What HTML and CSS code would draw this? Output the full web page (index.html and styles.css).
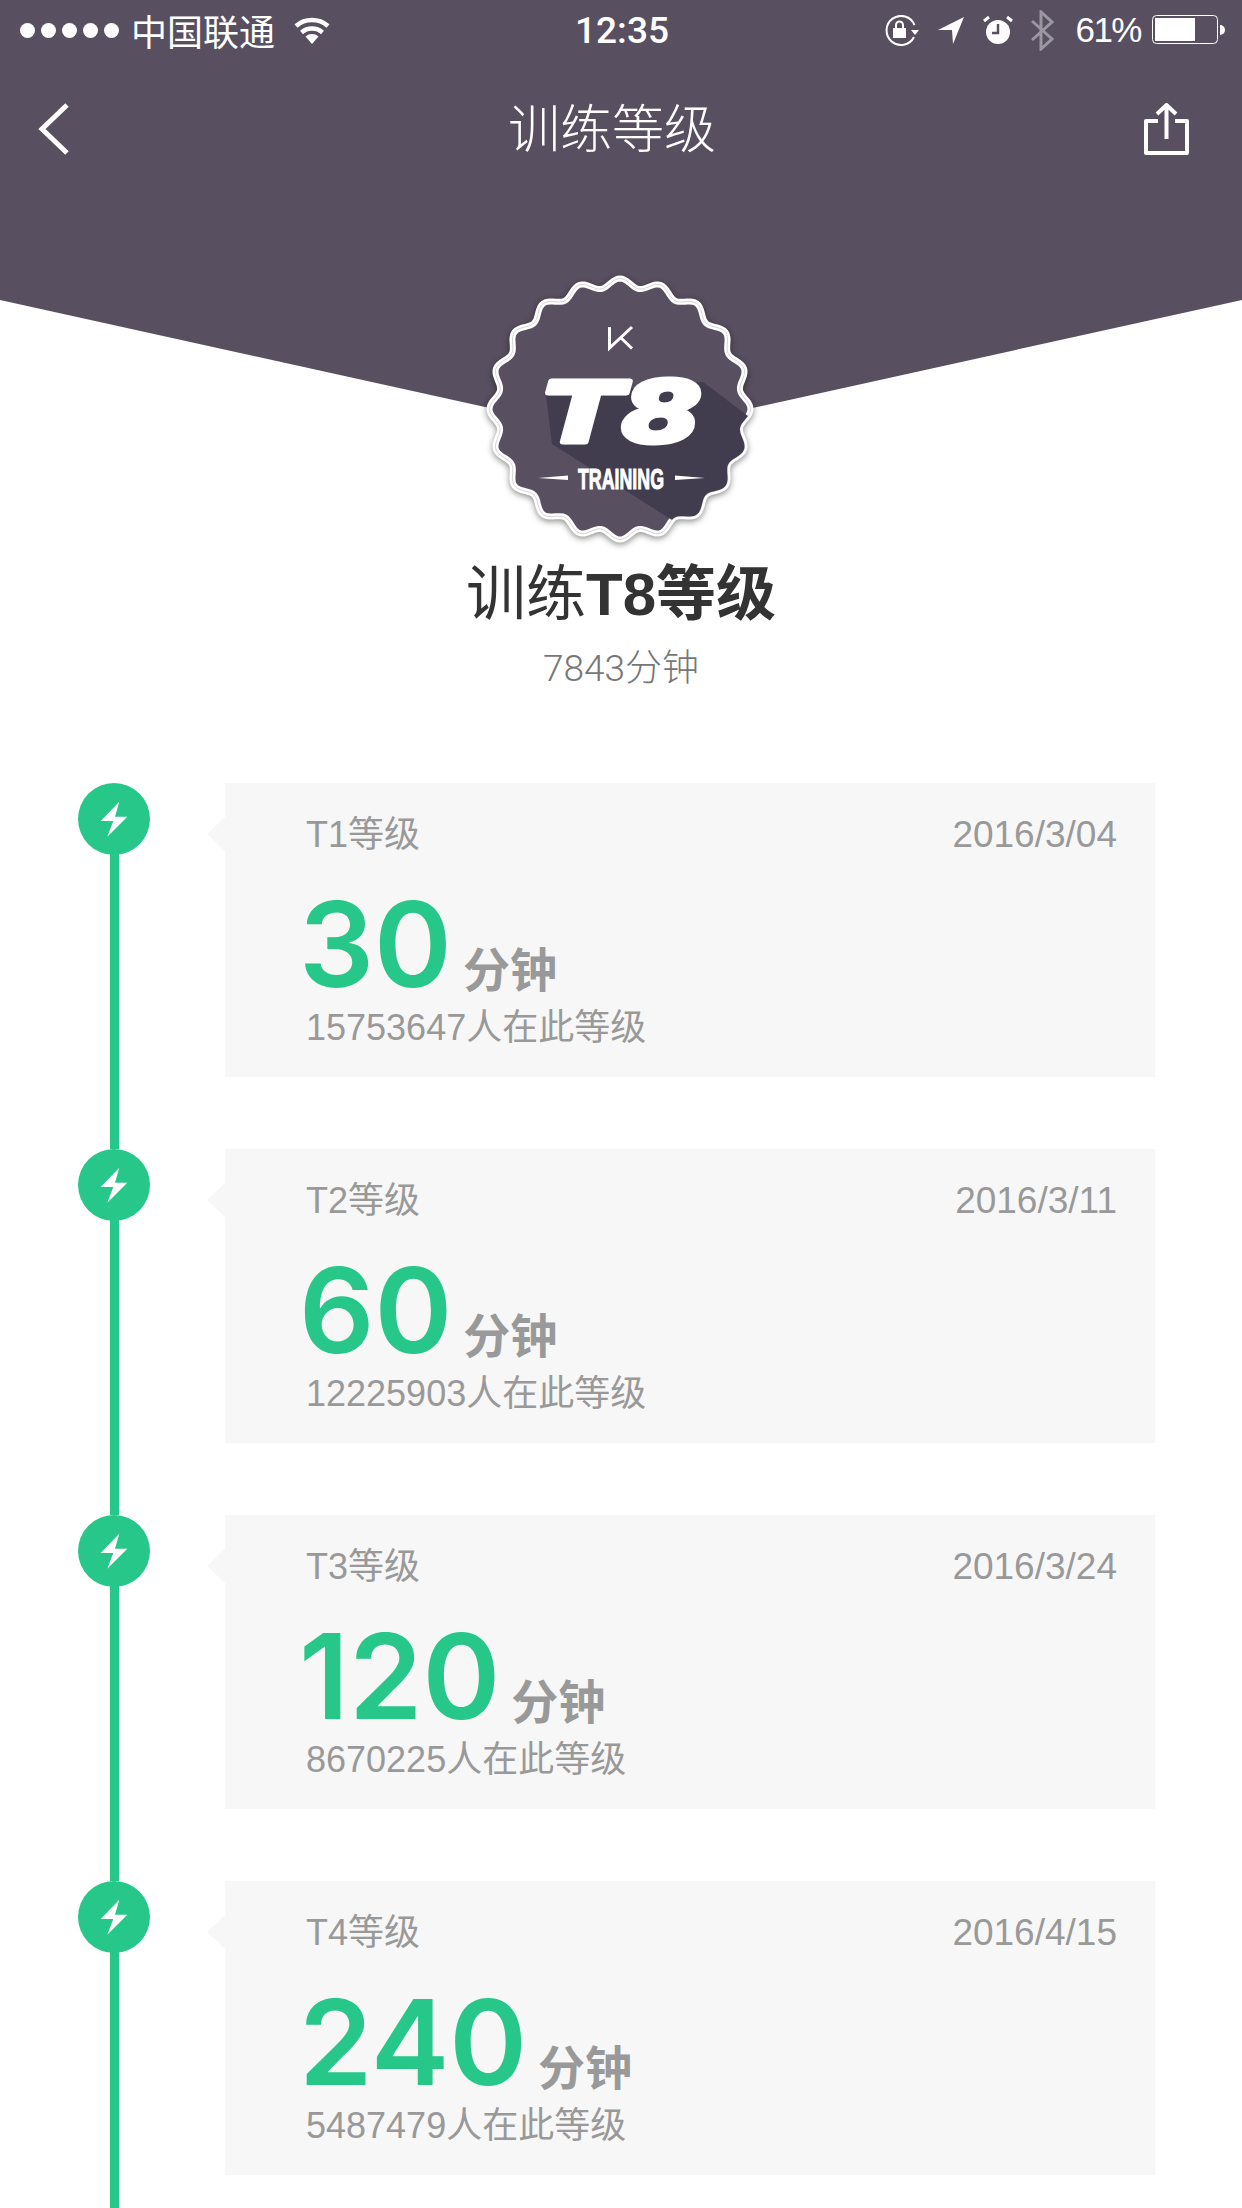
FILE: index.html
```html
<!doctype html>
<html>
  <head>
    <title>训练等级</title>
    <link rel="stylesheet" href="styles.css">
  </head>
  <body>
    <div class="hero">
      <div class="status-bar">
        <div class="status-left">
          <div class="signal">
            <span class="dot"></span><span class="dot"></span><span class="dot"></span><span class="dot"></span><span class="dot"></span>
          </div>
          <span class="carrier">中国联通</span>
          <svg class="icon-wifi" width="38" height="27" viewBox="0 0 38 27">
            <path d="M19 27 L12.500 19.500 A10 10 0 0 1 25.500 19.500 Z" fill="#fff"/>
            <path d="M8.500 15.500 A16 16 0 0 1 29.500 15.500 M3 9 A24.500 24.500 0 0 1 35 9" fill="none" stroke="#fff" stroke-width="4.500"/>
          </svg>
        </div>
        <div class="status-time">12:35</div>
        <div class="status-right">
          <svg width="35" height="31" viewBox="0 0 35 31">
            <path d="M29 22 A14.500 14.500 0 1 1 29.500 10" fill="none" stroke="#fff" stroke-width="2"/>
            <path d="M26 15 H34 L30 20 Z" fill="#fff"/>
            <rect x="8" y="13" width="13" height="10" fill="#fff"/>
            <path d="M11 13 V10 A3.500 3.500 0 0 1 18 10 V13" fill="none" stroke="#fff" stroke-width="2"/>
          </svg>
          <svg class="icon-location" width="26" height="27" viewBox="0 0 26 27">
            <path d="M0 13 L26 0 L15 27 L14 13 Z" fill="#fff"/>
          </svg>
          <svg class="icon-alarm" width="30" height="28" viewBox="0 0 30 28">
            <circle cx="15" cy="16" r="12" fill="#fff"/>
            <path d="M1 5 L6 1 M29 5 L24 1" stroke="#fff" stroke-width="3"/>
            <path d="M15 8 V17 H9" fill="none" stroke="#584f60" stroke-width="2.500"/>
          </svg>
          <svg class="icon-bluetooth" width="24" height="41" viewBox="0 0 24 41">
            <path d="M2 11 L22 29 L11 39 V2 L22 12 L2 30" fill="none" stroke="#9b96a1" stroke-width="3"/>
          </svg>
          <span class="battery-text">61%</span>
          <svg class="icon-battery" width="73" height="30" viewBox="0 0 73 30">
            <rect x="0.500" y="0.500" width="65" height="28" rx="4" fill="none" stroke="#fff"/>
            <rect x="3" y="3" width="40" height="23" fill="#fff"/>
            <path d="M68 10 A5 5 0 0 1 68 20 Z" fill="#fff"/>
          </svg>
        </div>
      </div>
      <div class="nav-bar">
        <svg width="32" height="52" viewBox="0 0 32 52">
          <path d="M29 2 L4 26 L29 50" fill="none" stroke="#fff" stroke-width="5"/>
        </svg>
        <div class="nav-title">训练等级</div>
        <svg width="45" height="52" viewBox="0 0 45 52">
          <path d="M14 18 H2 V50 H43 V18 H31" fill="none" stroke="#fff" stroke-width="4" stroke-linejoin="round"/>
          <path d="M22.500 36 V3 M13 11 L22.500 2 L32 11" fill="none" stroke="#fff" stroke-width="4"/>
        </svg>
      </div>
    </div>

    <svg class="badge" width="300" height="300" viewBox="471 259 300 300">
      <defs>
        <path id="badgeEdge"/>
        <clipPath id="badgeClip"><use href="#badgeEdge"/></clipPath>
      </defs>
      <use class="badge-edge" href="#badgeEdge"/>
      <use class="badge-bevel" href="#badgeEdge"/>
      <polygon class="badge-shadow" clip-path="url(#badgeClip)" points="703,382 780,440 790,500 680,525 552,444 546,395"/>
      <path class="badge-logo" d="M609.500 327 V348 L632 327 M620.500 337.500 L632 348.500"/>
      <text class="badge-grade" x="543" y="442" textLength="159" lengthAdjust="spacingAndGlyphs">T8</text>
      <text class="badge-label" x="578" y="489" textLength="86" lengthAdjust="spacingAndGlyphs">TRAINING</text>
      <path class="badge-rule" d="M538 478 L568 475.500 V480 Z M705 478 L675 475.500 V480 Z"/>
    </svg>

    <div class="summary">
      <div class="summary-title">训练<strong>T8等级</strong></div>
      <div class="summary-time">7843分钟</div>
    </div>

    <div class="timeline">
      <div class="level">
        <div class="rail">
          <svg class="node" width="72" height="72" viewBox="0 0 72 72">
            <circle cx="36" cy="36" r="36" fill="#26c789"/>
            <path d="M41.300 18.700 L22.700 38 H35.300 L29.300 53.700 L49.300 33.700 H37 Z" fill="#fff"/>
          </svg>
          <div class="rail-line"></div>
        </div>
        <div class="card">
          <div class="card-head">
            <span>T1等级</span>
            <span class="card-date">2016/3/04</span>
          </div>
          <div class="card-value">
            <span class="card-number">30</span>
            <span class="card-unit">分钟</span>
          </div>
          <div class="card-count">15753647人在此等级</div>
        </div>
      </div>

      <div class="level">
        <div class="rail">
          <svg class="node" width="72" height="72" viewBox="0 0 72 72">
            <circle cx="36" cy="36" r="36" fill="#26c789"/>
            <path d="M41.300 18.700 L22.700 38 H35.300 L29.300 53.700 L49.300 33.700 H37 Z" fill="#fff"/>
          </svg>
          <div class="rail-line"></div>
        </div>
        <div class="card">
          <div class="card-head">
            <span>T2等级</span>
            <span class="card-date">2016/3/11</span>
          </div>
          <div class="card-value">
            <span class="card-number">60</span>
            <span class="card-unit">分钟</span>
          </div>
          <div class="card-count">12225903人在此等级</div>
        </div>
      </div>

      <div class="level">
        <div class="rail">
          <svg class="node" width="72" height="72" viewBox="0 0 72 72">
            <circle cx="36" cy="36" r="36" fill="#26c789"/>
            <path d="M41.300 18.700 L22.700 38 H35.300 L29.300 53.700 L49.300 33.700 H37 Z" fill="#fff"/>
          </svg>
          <div class="rail-line"></div>
        </div>
        <div class="card">
          <div class="card-head">
            <span>T3等级</span>
            <span class="card-date">2016/3/24</span>
          </div>
          <div class="card-value">
            <span class="card-number">120</span>
            <span class="card-unit">分钟</span>
          </div>
          <div class="card-count">8670225人在此等级</div>
        </div>
      </div>

      <div class="level">
        <div class="rail">
          <svg class="node" width="72" height="72" viewBox="0 0 72 72">
            <circle cx="36" cy="36" r="36" fill="#26c789"/>
            <path d="M41.300 18.700 L22.700 38 H35.300 L29.300 53.700 L49.300 33.700 H37 Z" fill="#fff"/>
          </svg>
          <div class="rail-line"></div>
        </div>
        <div class="card">
          <div class="card-head">
            <span>T4等级</span>
            <span class="card-date">2016/4/15</span>
          </div>
          <div class="card-value">
            <span class="card-number">240</span>
            <span class="card-unit">分钟</span>
          </div>
          <div class="card-count">5487479人在此等级</div>
        </div>
      </div>
    </div>
    <script src="badge.js"></script>
  </body>
</html>
```
FILE: styles.css
```css
:root {
  --hero: #584f60;
  --green: #26c789;
  --card: #f7f7f7;
  --text-secondary: #999999;
}

html,
body {
  height: 2208px;
  overflow: hidden;
}

body {
  margin: 0;
  background: #ffffff;
  font-family: 'Liberation Sans', 'Noto Sans CJK SC', sans-serif;
  color: var(--text-secondary);
}

.hero {
  height: 437px;
  background: var(--hero);
  clip-path: polygon(0 0, 100% 0, 100% 300px, 50% 100%, 0 300px);
  color: #ffffff;
}

.status-bar {
  display: grid;
  grid-template-columns: 1fr auto 1fr;
  align-items: center;
  height: 60px;
  padding: 0 17px 0 20px;
  font-size: 36px;
}

.status-left {
  display: flex;
  align-items: center;
}

.signal {
  display: flex;
  gap: 6px;
  margin-right: 12px;
}

.dot {
  width: 15px;
  height: 15px;
  border-radius: 50%;
  background: #ffffff;
}

.carrier {
  font-size: 36px;
}

.icon-wifi {
  margin-left: 18px;
}

.status-time {
  padding-right: 1px;
  font-family: Roboto, sans-serif;
  font-size: 37px;
  font-weight: 500;
}

.status-right {
  display: flex;
  align-items: center;
  justify-content: flex-end;
}

.icon-location {
  margin-left: 18px;
}

.icon-alarm {
  margin-left: 19px;
}

.icon-bluetooth {
  margin-left: 17px;
}

.battery-text {
  margin-left: 21px;
  font-size: 35px;
  letter-spacing: -1.500px;
}

.icon-battery {
  margin-left: 11px;
}

.nav-bar {
  display: flex;
  align-items: center;
  justify-content: space-between;
  height: 52px;
  margin-top: 43px;
  padding: 0 53px 0 38px;
}

.nav-title {
  margin-left: 10px;
  padding-top: 2px;
  font-size: 52px;
  line-height: 52px;
  font-weight: 300;
}

.badge {
  display: block;
  margin: -178px auto 0;
  position: relative;
}

.badge-edge {
  fill: var(--hero);
  stroke: #ffffff;
  stroke-width: 6px;
  filter: drop-shadow(0 2px 3px rgba(0, 0, 0, 0.45));
}

.badge-bevel {
  fill: none;
  stroke: #d5d3d8;
  stroke-width: 1px;
}

.badge-shadow {
  fill: #423c4f;
}

.badge-logo {
  fill: none;
  stroke: #ffffff;
  stroke-width: 3px;
}

.badge-grade {
  font-family: 'DejaVu Sans', sans-serif;
  font-size: 83px;
  font-weight: 700;
  font-style: italic;
  fill: #ffffff;
  stroke: #ffffff;
  stroke-width: 5px;
  stroke-linejoin: round;
}

.badge-label {
  font-size: 29px;
  font-weight: 700;
  fill: #ffffff;
  stroke: #ffffff;
  stroke-width: 1px;
}

.badge-rule {
  fill: #ffffff;
}

.summary {
  margin-top: 1px;
  text-align: center;
}

.summary-title {
  font-size: 60px;
  line-height: 70px;
  color: #333333;
}

.summary-title strong {
  font-weight: 700;
}

.summary-time {
  margin-top: 17px;
  font-family: Roboto, 'Noto Sans CJK SC', sans-serif;
  font-size: 37px;
  line-height: 44px;
  font-weight: 300;
  color: #777777;
}

.timeline {
  margin-top: 92px;
  padding-left: 78px;
}

.level {
  display: flex;
  gap: 75px;
}

.rail {
  display: flex;
  flex-direction: column;
  align-items: center;
  width: 72px;
}

.node {
  flex-shrink: 0;
}

.rail-line {
  flex-grow: 1;
  width: 9px;
  margin-top: -3px;
  background: var(--green);
}

.card {
  position: relative;
  box-sizing: border-box;
  width: 930px;
  height: 294px;
  margin-bottom: 72px;
  padding: 32px 38px 0 81px;
  background: var(--card);
}

.card::before {
  content: '';
  position: absolute;
  left: -18px;
  top: 34px;
  border-style: solid;
  border-width: 17px 18px 17px 0;
  border-color: transparent var(--card) transparent transparent;
}

.card-head {
  display: flex;
  justify-content: space-between;
  font-size: 36px;
  line-height: 40px;
}

.card-date {
  font-size: 37px;
}

.card-value {
  display: flex;
  align-items: baseline;
  gap: 11px;
  margin: 39px 0 0 -7px;
}

.card-number {
  font-family: Inter, sans-serif;
  font-size: 118px;
  line-height: 100px;
  font-weight: 600;
  color: var(--green);
}

.card-unit {
  font-size: 47px;
  line-height: 50px;
  font-weight: 700;
}

.card-count {
  margin-top: 10px;
  font-size: 36px;
  line-height: 44px;
}
```
FILE: badge.js
```js
// scalloped edge of the badge, 20 bumps round a circle
const cx = 620
const cy = 409
const points = []

for (let i = 0; i < 360; i++) {
  const angle = (i / 360) * Math.PI * 2
  const radius = 126 + 4.5 * Math.cos(angle * 20)
  const x = cx + radius * Math.cos(angle)
  const y = cy + radius * Math.sin(angle)
  points.push(`${x.toFixed(1)} ${y.toFixed(1)}`)
}

document.getElementById('badgeEdge').setAttribute('d', `M${points.join('L')}Z`)
```
